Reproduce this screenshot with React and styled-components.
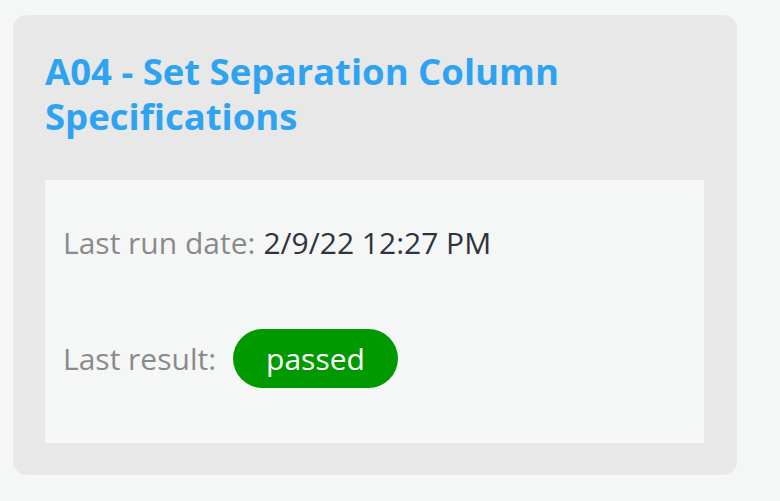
import React from 'react';
import styled, { createGlobalStyle } from 'styled-components';

const GlobalStyle = createGlobalStyle`
  html, body {
    margin: 0;
    padding: 0;
    background: #f5f7f7;
  }
  body {
    font-family: "Open Sans", "Liberation Sans", sans-serif;
  }
`;

const Page = styled.div`
  padding: 15px 0 0 13px;
`;

const Card = styled.section`
  width: 724px;
  box-sizing: border-box;
  background: #e8e8e8;
  border-radius: 14px;
  padding: 34px 33px 32px 32px;
`;

const Title = styled.h2`
  margin: 0 0 41px;
  font-size: 36.5px;
  line-height: 45px;
  font-weight: 700;
  color: #2ea3f2;
`;

const Details = styled.div`
  background: #f5f7f7;
  padding: 43px 18px 55px;
  display: flex;
  flex-direction: column;
  gap: 66px;
`;

const Row = styled.div`
  display: flex;
  align-items: center;
  gap: ${props => props.gap || 10}px;
  font-size: 30px;
  line-height: 40px;
`;

const Label = styled.span`
  color: #8a8a8a;
`;

const Value = styled.span`
  color: #2f333b;
`;

const Badge = styled.span`
  display: inline-flex;
  align-items: center;
  justify-content: center;
  height: 59px;
  padding: 0 33px;
  border-radius: 30px;
  background: #009a00;
  color: #ffffff;
`;

export default function App() {
  return (
    <>
      <GlobalStyle />
      <Page>
        <Card>
          <Title>A04 - Set Separation Column Specifications</Title>
          <Details>
            <Row gap={8}>
              <Label>Last run date:</Label>
              <Value>2/9/22 12:27 PM</Value>
            </Row>
            <Row gap={17}>
              <Label>Last result:</Label>
              <Badge>passed</Badge>
            </Row>
          </Details>
        </Card>
      </Page>
    </>
  );
}
